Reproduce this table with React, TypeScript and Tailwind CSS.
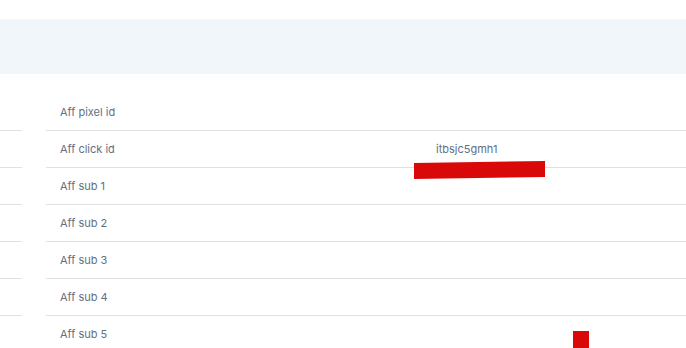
import React from "react";

const labels = [
  "Aff pixel id",
  "Aff click id",
  "Aff sub 1",
  "Aff sub 2",
  "Aff sub 3",
  "Aff sub 4",
  "Aff sub 5",
];

const values: Record<string, string> = {
  "Aff click id": "itbsjc5gmh1",
};

const App = () => {
  return (
    <div
      className="relative w-[686px] h-[348px] overflow-hidden bg-white"
      style={{ fontFamily: "Inter, 'Noto Sans', sans-serif" }}
    >
      <div className="pt-[19px]">
        <div className="h-[55px] bg-[#f1f6fa]" />
      </div>

      <div className="mt-[20px] flex gap-[24px]">
        {/* left column, mostly scrolled out of view */}
        <div className="w-[22px] flex flex-col">
          {labels.map((l) => (
            <div key={l} className="h-[37px] border-b border-[#dfe1e6]" />
          ))}
        </div>

        <div className="flex-1 flex flex-col">
          {labels.map((l) => (
            <div
              key={l}
              className="h-[37px] flex items-center border-b border-[#dfe1e6] text-[11px] text-[#646f82]"
            >
              <span className="w-[390px] pl-[14px]">{l}</span>
              <span>{values[l] ?? ""}</span>
            </div>
          ))}
        </div>
      </div>

      {/* redaction marks */}
      <svg
        className="absolute left-[414px] top-[160px]"
        width="132"
        height="20"
        viewBox="0 0 132 20"
      >
        <polygon points="0,3 131,1 131,17 0,19" fill="#d90909" />
      </svg>
      <div className="absolute left-[573px] top-[331px] w-[16px] h-[18px] bg-[#d90909]" />
    </div>
  );
};

export default App;
